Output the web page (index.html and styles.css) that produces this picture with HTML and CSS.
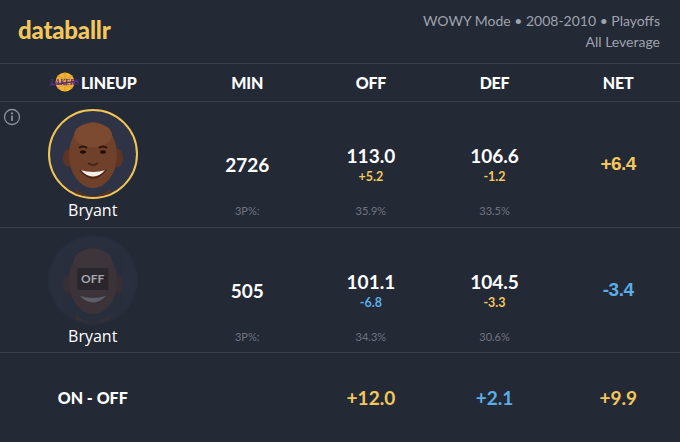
FILE: index.html
```html
<!DOCTYPE html>
<html>
<head>
<meta charset="utf-8">
<link rel="stylesheet" href="styles.css">
</head>
<body>
<div class="app">
  <header class="topbar">
    <div class="brand">databallr</div>
    <div class="meta">
      <div>WOWY Mode • 2008-2010 • Playoffs</div>
      <div>All Leverage</div>
    </div>
  </header>

  <div class="table">
    <div class="row head">
      <div class="cell lineup-head">
        <svg class="lakers" viewBox="0 0 30 22" width="30" height="22">
          <circle cx="16" cy="11" r="9.5" fill="#f2b434"/>
          <path d="M8.5 5 Q16 10 23.5 5 M8.5 17 Q16 12 23.5 17 M16 1.5 V20.5" stroke="#d8961c" stroke-width="0.8" fill="none"/>
          <path d="M1 14 L29.5 10" stroke="#5b2b86" stroke-width="1.3"/>
          <text x="15.5" y="14" text-anchor="middle" class="lk-text">LAKERS</text>
        </svg>
        <span>LINEUP</span>
      </div>
      <div class="cell">MIN</div>
      <div class="cell">OFF</div>
      <div class="cell">DEF</div>
      <div class="cell">NET</div>
    </div>

    <div class="row player first">
      <div class="cell lineup">
        <svg class="info" viewBox="0 0 18 18" width="18" height="18">
          <circle cx="9" cy="9" r="7.5" fill="none" stroke="#8b909b" stroke-width="1.3"/>
          <circle cx="9" cy="5.4" r="1.1" fill="#8b909b"/>
          <rect x="8.1" y="7.6" width="1.8" height="5.4" rx="0.6" fill="#8b909b"/>
        </svg>
        <div class="avatar on">
          <svg viewBox="0 0 86 86" width="86" height="86">
            <ellipse cx="18" cy="47" rx="5" ry="9" fill="#5e3523"/>
            <ellipse cx="68" cy="47" rx="5" ry="9" fill="#5e3523"/>
            <path d="M26 78 Q43 92 60 78 L62 90 L24 90 Z" fill="#5a3220"/>
            <ellipse cx="43" cy="44" rx="24" ry="33" fill="#70412a"/>
            <ellipse cx="43" cy="24" rx="19" ry="12" fill="#7c4a31"/>
            <path d="M29 37 Q33 34 37 37 M49 37 Q53 34 57 37" stroke="#2a140c" stroke-width="2" fill="none"/>
            <ellipse cx="33" cy="41" rx="3" ry="1.7" fill="#1e0d07"/>
            <ellipse cx="53" cy="41" rx="3" ry="1.7" fill="#1e0d07"/>
            <path d="M38 52 Q43 56 48 52" stroke="#4a2516" stroke-width="2" fill="none"/>
            <path d="M30 59 Q43 72 56 59 Q43 63 30 59 Z" fill="#f4efe9"/>
            <path d="M30 59 Q43 75 56 59" stroke="#4a2516" stroke-width="1.3" fill="none"/>
          </svg>
        </div>
        <div class="name">Bryant</div>
      </div>
      <div class="cell stat">
        <div class="main"><div class="val">2726</div></div>
        <div class="pct">3P%:</div>
      </div>
      <div class="cell stat">
        <div class="main"><div class="val">113.0</div><div class="diff good">+5.2</div></div>
        <div class="pct">35.9%</div>
      </div>
      <div class="cell stat">
        <div class="main"><div class="val">106.6</div><div class="diff good">-1.2</div></div>
        <div class="pct">33.5%</div>
      </div>
      <div class="cell stat">
        <div class="main"><div class="net good">+6.4</div></div>
      </div>
    </div>

    <div class="row player">
      <div class="cell lineup">
        <div class="avatar off">
          <svg class="dim" viewBox="0 0 86 86" width="86" height="86">
            <ellipse cx="18" cy="47" rx="5" ry="9" fill="#5e3523"/>
            <ellipse cx="68" cy="47" rx="5" ry="9" fill="#5e3523"/>
            <path d="M26 78 Q43 92 60 78 L62 90 L24 90 Z" fill="#5a3220"/>
            <ellipse cx="43" cy="44" rx="24" ry="33" fill="#70412a"/>
            <ellipse cx="43" cy="24" rx="19" ry="12" fill="#7c4a31"/>
            <ellipse cx="33" cy="41" rx="3" ry="1.7" fill="#1e0d07"/>
            <ellipse cx="53" cy="41" rx="3" ry="1.7" fill="#1e0d07"/>
            <path d="M30 59 Q43 72 56 59 Q43 63 30 59 Z" fill="#f4efe9"/>
          </svg>
          <span class="off-tag">OFF</span>
        </div>
        <div class="name">Bryant</div>
      </div>
      <div class="cell stat">
        <div class="main"><div class="val">505</div></div>
        <div class="pct">3P%:</div>
      </div>
      <div class="cell stat">
        <div class="main"><div class="val">101.1</div><div class="diff bad">-6.8</div></div>
        <div class="pct">34.3%</div>
      </div>
      <div class="cell stat">
        <div class="main"><div class="val">104.5</div><div class="diff good">-3.3</div></div>
        <div class="pct">30.6%</div>
      </div>
      <div class="cell stat">
        <div class="main"><div class="net bad">-3.4</div></div>
      </div>
    </div>

    <div class="row total">
      <div class="cell label">ON - OFF</div>
      <div class="cell"></div>
      <div class="cell good">+12.0</div>
      <div class="cell bad">+2.1</div>
      <div class="cell good">+9.9</div>
    </div>
  </div>
</div>
</body>
</html>
```

FILE: styles.css
```css
* { box-sizing: border-box; }

html, body {
  margin: 0;
  padding: 0;
  background: #242936;
}

body {
  width: 680px;
  height: 442px;
  overflow: hidden;
  font-family: Lato, "Liberation Sans", sans-serif;
  color: #ffffff;
}

.topbar {
  height: 64px;
  display: flex;
  justify-content: space-between;
  align-items: center;
  padding: 0 20px 0 18px;
  border-bottom: 1px solid #3a3f4c;
}

.brand {
  font-family: Lato, sans-serif;
  font-weight: 900;
  font-size: 24px;
  color: #f3c75b;
  letter-spacing: -0.2px;
  margin-top: -5px;
}

.meta {
  text-align: right;
  font-size: 14px;
  line-height: 21px;
  color: #9fa3ad;
  margin-top: -2px;
}

.row {
  display: grid;
  grid-template-columns: 1.5fr 1fr 1fr 1fr 1fr;
  border-bottom: 1px solid #3a3f4c;
}

.cell {
  display: flex;
  justify-content: center;
  align-items: center;
}

.head {
  height: 38px;
  font-weight: 900;
  font-size: 16px;
  letter-spacing: -0.2px;
}

.lineup-head {
  gap: 2px;
}

.lakers {
  display: block;
  margin-top: -1px;
}

.lk-text {
  font-family: "Liberation Serif", serif;
  font-style: italic;
  font-weight: 700;
  font-size: 8px;
  fill: #5b2b86;
  letter-spacing: -0.4px;
}

.player {
  height: 125px;
}

.player.first {
  height: 126px;
}

.lineup {
  position: relative;
  flex-direction: column;
  justify-content: flex-start;
  padding-top: 7px;
}

.info {
  position: absolute;
  left: 3px;
  top: 6px;
}

.avatar {
  position: relative;
  width: 90px;
  height: 90px;
  border-radius: 50%;
  background: #2e3445;
  overflow: hidden;
  display: flex;
  justify-content: center;
  align-items: flex-end;
}

.avatar svg {
  display: block;
}

.avatar.on {
  border: 2px solid #f0c556;
}

.avatar.off {
  background: #2a2f3e;
  border: 2px solid #282d3b;
}

.avatar .dim {
  opacity: 0.25;
}

.off-tag {
  position: absolute;
  top: 31px;
  left: 50%;
  transform: translateX(-50%);
  background: rgba(30, 32, 38, 0.6);
  color: #a4a6ab;
  font-weight: 700;
  font-size: 12px;
  padding: 4px 4px;
  line-height: 14px;
}

.name {
  font-family: "Open Sans", "Noto Sans", sans-serif;
  font-size: 16px;
  line-height: 20px;
  margin-top: 1px;
  color: #ffffff;
}

.stat {
  flex-direction: column;
  justify-content: flex-start;
  padding-top: 25px;
}

.main {
  height: 76px;
  display: flex;
  flex-direction: column;
  justify-content: center;
  align-items: center;
}

.val {
  font-weight: 700;
  font-size: 19px;
  line-height: 22px;
}

.diff {
  font-weight: 700;
  font-size: 12.5px;
  line-height: 18px;
  margin-top: 1px;
}

.net {
  font-family: "Liberation Sans", Arial, sans-serif;
  font-weight: 700;
  font-size: 19px;
  line-height: 22px;
  letter-spacing: -0.5px;
  margin-top: -2px;
}

.pct {
  font-size: 11px;
  line-height: 16px;
  color: #6f7480;
}

.good { color: #f3c75b; }
.bad { color: #5bade6; }

.total {
  height: 90px;
  border-bottom: none;
  font-weight: 700;
  font-size: 19px;
}

.total .cell {
  padding-bottom: 2px;
}

.total .label {
  font-size: 16px;
  font-weight: 900;
}
```
